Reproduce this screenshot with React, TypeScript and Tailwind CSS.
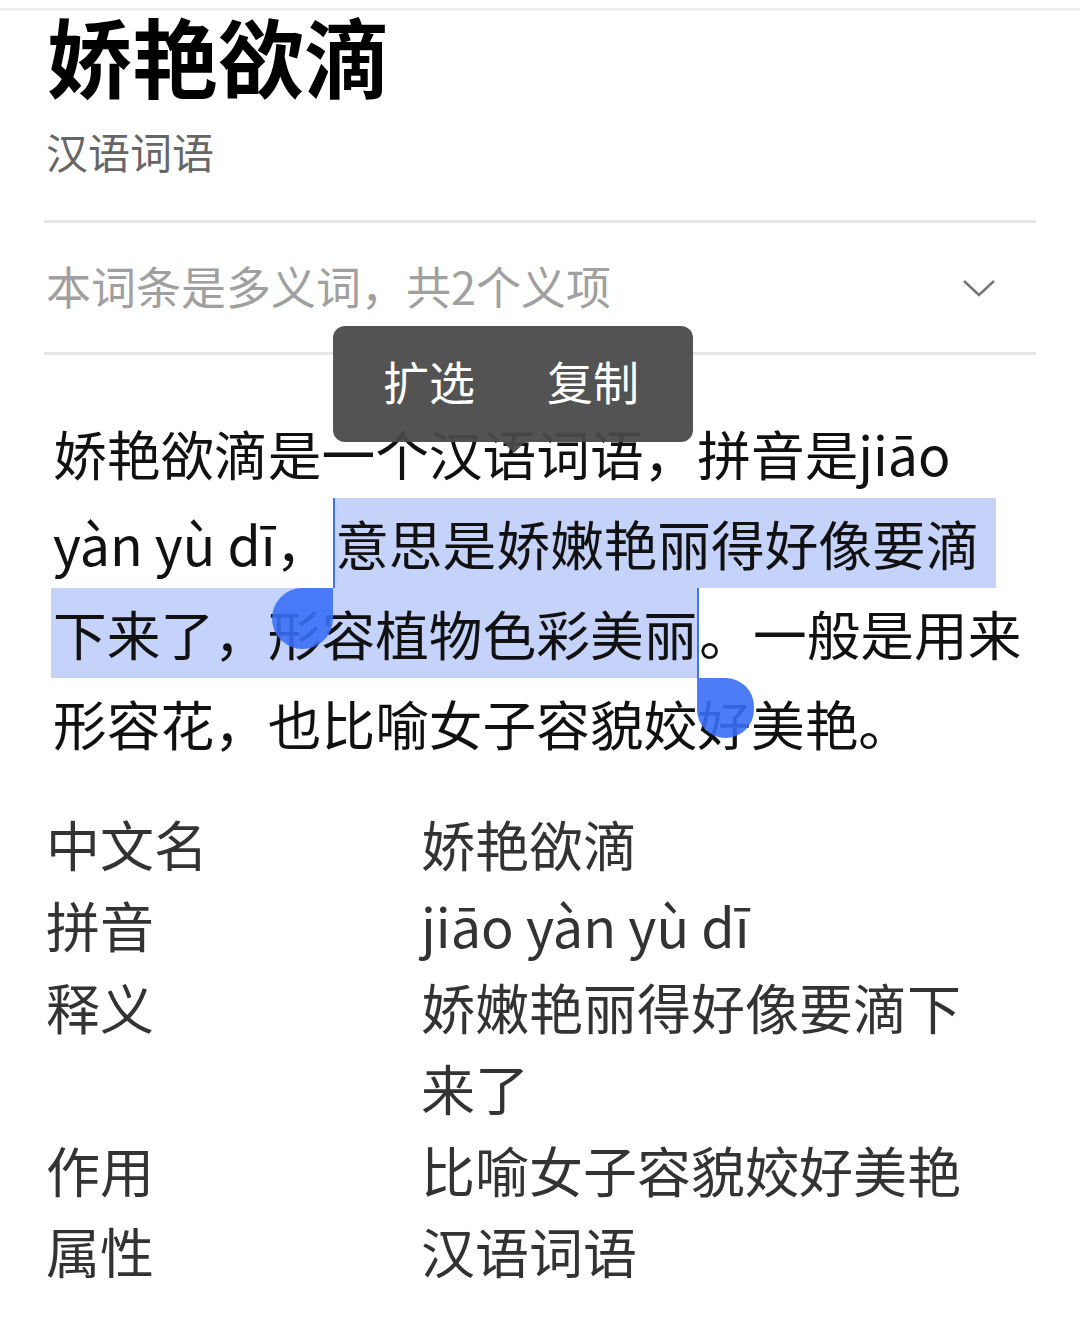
import React from 'react';

const selBg = 'bg-[#c5d3fb]';

const facts: { label: string; value: string }[] = [
  { label: '中文名', value: '娇艳欲滴' },
  { label: '拼音', value: 'jiāo yàn yù dī' },
  { label: '释义', value: '娇嫩艳丽得好像要滴下来了' },
  { label: '作用', value: '比喻女子容貌姣好美艳' },
  { label: '属性', value: '汉语词语' },
];

const SelectionPopup = () => (
  <div className="absolute left-[333px] top-[326px] z-30">
    <div className="flex h-[116px] w-[360px] items-center gap-[72px] rounded-[12px] bg-[#4a4a4a]/95 pb-[8px] pl-[50px] text-[46px] leading-none text-white">
      <span>扩选</span>
      <span>复制</span>
    </div>
    <div className="ml-[170px] h-0 w-0 border-x-[11px] border-t-[11px] border-x-transparent border-t-[#4a4a4a]/95" />
  </div>
);

export default function App() {
  return (
    <div className="relative h-[1340px] w-[1080px] overflow-hidden bg-white font-['Noto_Sans_CJK_SC',sans-serif]">
      <div className="h-[8px]" />
      <div className="h-[3px] bg-[#eeeeee]" />

      <div className="px-[44px]">
        <h1 className="pl-[2px] text-[86px] font-bold leading-[88px] text-black">娇艳欲滴</h1>
        <p className="mt-[31px] pl-[2px] text-[42px] leading-[42px] text-[#666666]">汉语词语</p>

        <div className="mt-[48px] h-[3px] bg-[#e6e6e6]" />
        <div className="flex h-[129px] items-center justify-between pl-[2px] pr-[40px]">
          <span className="pb-[5px] text-[45px] leading-none text-[#a0a0a0]">本词条是多义词，共2个义项</span>
          <svg width="34" height="20" viewBox="0 0 34 20" fill="none">
            <polyline points="2,3 17,17 32,3" stroke="#767676" strokeWidth="2.5" />
          </svg>
        </div>
        <div className="h-[3px] bg-[#e6e6e6]" />
      </div>

      <SelectionPopup />

      {/* description with active text selection */}
      <div className="mt-[53px] pl-[51px] text-[53.7px] leading-none text-[#111111]">
        <div className="flex h-[90px] items-center whitespace-nowrap pl-[2px]">娇艳欲滴是一个汉语词语，拼音是jiāo</div>
        <div className="flex h-[90px] items-center whitespace-nowrap">
          <span className="pl-[2px]">yàn yù dī，</span>
          <span className={`relative ml-[4px] flex items-center self-stretch border-l-2 border-[#3d74f5] pr-[17px] ${selBg}`}>
            意思是娇嫩艳丽得好像要滴
            <span className="absolute left-[-63px] top-full z-20 h-[61px] w-[61px] rounded-full rounded-tr-none bg-[#3a6ff5]/90" />
          </span>
        </div>
        <div className="flex h-[90px] items-center whitespace-nowrap">
          <span className={`relative flex items-center self-stretch border-r-2 border-[#3d74f5] pl-[2px] ${selBg}`}>
            下来了，形容植物色彩美丽
            <span className="absolute left-full top-full z-20 h-[60px] w-[57px] rounded-full rounded-tl-none bg-[#3a6ff5]/90" />
          </span>
          <span>。一般是用来</span>
        </div>
        <div className="flex h-[90px] items-center whitespace-nowrap pl-[2px]">形容花，也比喻女子容貌姣好美艳。</div>
      </div>

      <div className="mt-[35px] grid grid-cols-[375px_575px] pl-[46px] text-[54px] leading-[81.4px] text-[#333333]">
        {facts.map((f) => (
          <React.Fragment key={f.label}>
            <div>{f.label}</div>
            <div>{f.value}</div>
          </React.Fragment>
        ))}
      </div>
    </div>
  );
}
